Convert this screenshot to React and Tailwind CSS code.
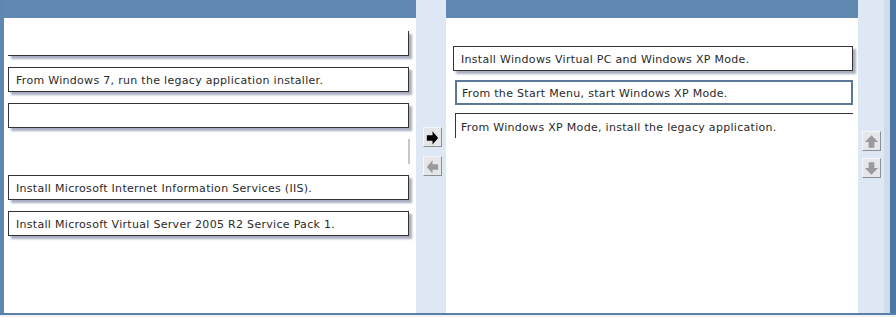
import React from "react";

const font = { fontFamily: '"DejaVu Sans", Verdana, sans-serif' };

function Btn({ dir, active }) {
  const fill = active ? "#000000" : "#9a9a9a";
  const pts = {
    right: "3,7 9,7 9,3 15,10 9,17 9,13 3,13",
    left: "15,7 9,7 9,3 3,10 9,17 9,13 15,13",
    up: "6,16 6,10 2,10 9,3 16,10 12,10 12,16",
    down: "6,3 6,9 2,9 9,16 16,9 12,9 12,3",
  }[dir];
  return (
    <div className="w-[19px] h-[20px] bg-[#e4e6ea] border border-t-[#f6f7f9] border-l-[#f6f7f9] border-r-[#8a8f98] border-b-[#8a8f98] flex items-center justify-center">
      <svg width="18" height="19" viewBox="0 0 18 19">
        <polygon points={pts} fill={fill} />
      </svg>
    </div>
  );
}

function Box({ children, variant = "full", className = "" }) {
  const base = "h-[25px] flex items-center text-[11px] tracking-[0.3px] text-[#2a2a2a] leading-none";
  const styles = {
    full: "border border-[#333] bg-white shadow-[3px_3px_2px_#a7afc0] pl-[7px] pt-[2px]",
    rb: "border-r border-b border-[#333] shadow-[3px_3px_2px_#a7afc0]",
    ghost: "border-r-2 border-[#c8c8c8] mr-[-1px]",
    selected: "border-2 border-[#5b7896] bg-white pl-[5px] pt-[2px]",
    tl: "border-t border-l border-[#333] pl-[5px] items-start pt-[8px]",
  }[variant];
  return <div className={`${base} ${styles} ${className}`}>{children}</div>;
}

export default function App() {
  return (
    <div className="w-[896px] h-[317px] flex flex-col bg-white overflow-hidden" style={font}>
      <div className="flex h-[313px]">
        <div className="w-[4px] bg-[#5f87b0]" />
        <div className="w-[412px] flex flex-col">
          <div className="h-[18px] bg-[#6089b2]" />
          <div className="flex-1 bg-white pt-[13px] pl-[4px] pr-[7px] flex flex-col gap-[11px]">
            <Box variant="rb" />
            <Box>From Windows 7, run the legacy application installer.</Box>
            <Box />
            <Box variant="ghost" />
            <Box>Install Microsoft Internet Information Services (IIS).</Box>
            <Box>Install Microsoft Virtual Server 2005 R2 Service Pack 1.</Box>
          </div>
        </div>
        <div className="w-[30px] bg-[#dde8f4] flex flex-col items-center pt-[127px] gap-[9px] pl-[2px]">
          <Btn dir="right" active />
          <Btn dir="left" />
        </div>
        <div className="w-[412px] flex flex-col">
          <div className="h-[18px] bg-[#6089b2]" />
          <div className="flex-1 bg-white pt-[28px] pl-[7px] pr-[5px] flex flex-col">
            <Box>Install Windows Virtual PC and Windows XP Mode.</Box>
            <Box variant="selected" className="mt-[9px] ml-[2px] h-[24px]">From the Start Menu, start Windows XP Mode.</Box>
            <Box variant="tl" className="mt-[8px] ml-[2px] h-[22px]">From Windows XP Mode, install the legacy application.</Box>
          </div>
        </div>
        <div className="w-[32px] bg-[#dde8f4] flex flex-col items-center pt-[131px] gap-[7px] border-r-[6px] border-r-[#d0dcea]">
          <Btn dir="up" />
          <Btn dir="down" />
        </div>
        <div className="w-[6px] bg-[#4d76a3]" />
      </div>
      <div className="h-[2px] bg-[#5a80aa]" />
      <div className="flex-1 bg-[#eef1f5]" />
    </div>
  );
}
